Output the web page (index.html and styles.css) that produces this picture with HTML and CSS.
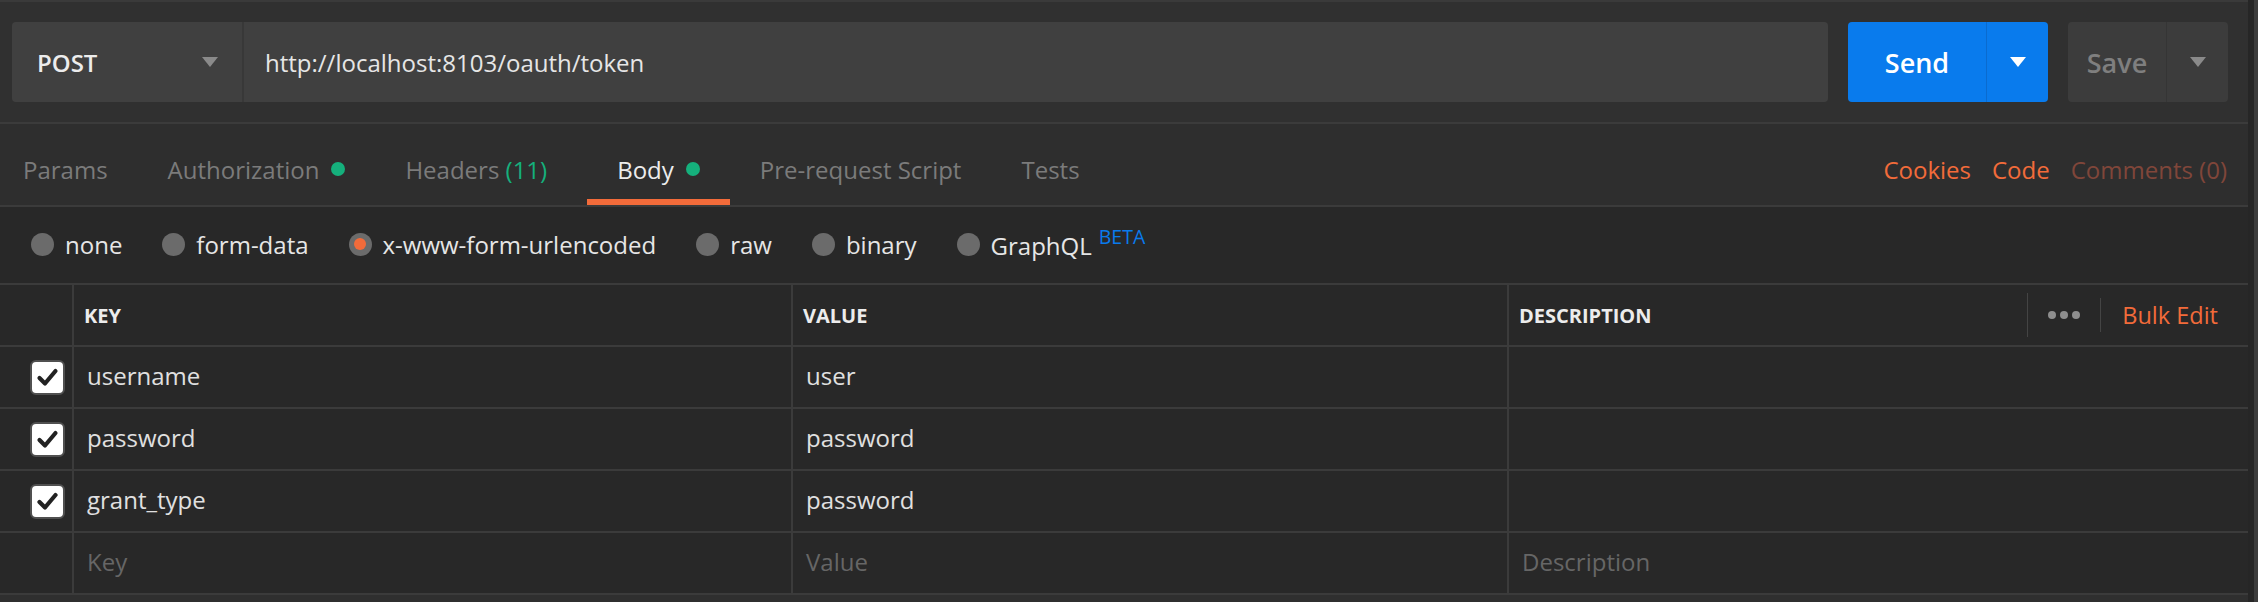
FILE: index.html
```html
<!DOCTYPE html>
<html>
<head>
<meta charset="utf-8">
<link rel="stylesheet" href="styles.css">
</head>
<body>
<div class="app">
  <div class="main">
    <div class="topbar">
      <div class="urlbox">
        <div class="method">
          <span class="method-name">POST</span>
          <span class="tri tri-gray"></span>
        </div>
        <div class="url">http://localhost:8103/oauth/token</div>
      </div>
      <div class="btn send">
        <span class="btn-label">Send</span>
        <span class="btn-arrow send-arrow"><span class="tri tri-white"></span></span>
      </div>
      <div class="btn save">
        <span class="btn-label">Save</span>
        <span class="btn-arrow save-arrow"><span class="tri tri-gray"></span></span>
      </div>
    </div>

    <div class="tabbar">
      <div class="tabs">
        <div class="tab first">Params</div>
        <div class="tab">Authorization<span class="gdot"></span></div>
        <div class="tab">Headers&nbsp;<span class="count">(11)</span></div>
        <div class="tab active">Body<span class="gdot"></span></div>
        <div class="tab">Pre-request Script</div>
        <div class="tab">Tests</div>
      </div>
      <div class="links">
        <span class="link">Cookies</span>
        <span class="link">Code</span>
        <span class="link dim">Comments (0)</span>
      </div>
    </div>

    <div class="bodytypes">
      <div class="radio"><span class="circle"></span><span>none</span></div>
      <div class="radio"><span class="circle"></span><span>form-data</span></div>
      <div class="radio"><span class="circle checked"><span class="inner"></span></span><span>x-www-form-urlencoded</span></div>
      <div class="radio"><span class="circle"></span><span>raw</span></div>
      <div class="radio"><span class="circle"></span><span>binary</span></div>
      <div class="radio"><span class="circle"></span><span class="label">GraphQL<sup class="beta">BETA</sup></span></div>
    </div>

    <div class="table">
      <div class="cell hcell c0"></div>
      <div class="cell hcell">KEY</div>
      <div class="cell hcell">VALUE</div>
      <div class="cell hcell desc-head">
        <span>DESCRIPTION</span>
        <div class="actions">
          <span class="vsep tall"></span>
          <span class="dots"><i></i><i></i><i></i></span>
          <span class="vsep"></span>
          <span class="bulk">Bulk Edit</span>
        </div>
      </div>

      <div class="cell c0"><span class="cb"><svg width="31" height="31" viewBox="0 0 31 31"><polyline points="7.5,16 13,21.5 23.5,9" fill="none" stroke="#222" stroke-width="4.2" stroke-linecap="round" stroke-linejoin="round"/></svg></span></div>
      <div class="cell txt">username</div>
      <div class="cell txt">user</div>
      <div class="cell txt"></div>

      <div class="cell c0"><span class="cb"><svg width="31" height="31" viewBox="0 0 31 31"><polyline points="7.5,16 13,21.5 23.5,9" fill="none" stroke="#222" stroke-width="4.2" stroke-linecap="round" stroke-linejoin="round"/></svg></span></div>
      <div class="cell txt">password</div>
      <div class="cell txt">password</div>
      <div class="cell txt"></div>

      <div class="cell c0"><span class="cb"><svg width="31" height="31" viewBox="0 0 31 31"><polyline points="7.5,16 13,21.5 23.5,9" fill="none" stroke="#222" stroke-width="4.2" stroke-linecap="round" stroke-linejoin="round"/></svg></span></div>
      <div class="cell txt">grant_type</div>
      <div class="cell txt">password</div>
      <div class="cell txt"></div>

      <div class="cell c0"></div>
      <div class="cell txt ph">Key</div>
      <div class="cell txt ph">Value</div>
      <div class="cell txt ph">Description</div>
    </div>
    <div class="footer"></div>
  </div>
  <div class="scrollbar">
    <div class="sb-dark"></div>
    <div class="sb-light"></div>
  </div>
</div>
</body>
</html>
```

FILE: styles.css
```css
* { box-sizing: border-box; }
html, body {
  margin: 0;
  padding: 0;
  background: #2f2f2f;
}
body {
  font-family: "Open Sans", "Noto Sans", sans-serif;
  font-size: 24px;
  color: #e0e0e0;
}
.app {
  display: flex;
  width: 2258px;
  height: 602px;
  overflow: hidden;
}
.main {
  width: 2248px;
  display: flex;
  flex-direction: column;
  background: #2f2f2f;
}
.scrollbar {
  width: 10px;
  display: flex;
}
.sb-dark { width: 6px; background: #262626; }
.sb-light { width: 4px; background: #3c3c3c; }

/* top bar */
.topbar {
  display: flex;
  gap: 20px;
  padding: 20px 20px 20px 12px;
  border-top: 2px solid #3a3a3a;
  border-bottom: 2px solid #3b3b3b;
  height: 124px;
  background: #303030;
}
.urlbox {
  flex: 1;
  display: flex;
  background: #404040;
  border-radius: 4px;
  height: 80px;
}
.method {
  width: 232px;
  display: flex;
  align-items: center;
  justify-content: space-between;
  padding: 0 24px 0 25px;
  border-right: 2px solid #383838;
}
.method-name {
  font-weight: 600;
  font-size: 24px;
  color: #ececec;
}
.url {
  display: flex;
  align-items: center;
  padding-left: 21px;
  color: #e6e6e6;
}
.tri {
  width: 0;
  height: 0;
  border-left: 8px solid transparent;
  border-right: 8px solid transparent;
  border-top: 10px solid #8a8a8a;
}
.tri-white { border-top-color: #ffffff; }
.tri-gray { border-top-color: #8a8a8a; }
.btn {
  display: flex;
  height: 80px;
  border-radius: 4px;
  font-size: 27px;
  font-weight: 600;
}
.send {
  width: 200px;
  background: #097bed;
  color: #ffffff;
}
.save {
  width: 160px;
  background: #3c3c3c;
  color: #7f7f7f;
}
.btn-label {
  display: flex;
  align-items: center;
  justify-content: center;
}
.send .btn-label { width: 139px; border-right: 1px solid #0a6bcf; }
.save .btn-label { width: 99px; border-right: 1px solid #353535; }
.btn-arrow {
  flex: 1;
  display: flex;
  align-items: center;
  justify-content: center;
}

/* tabs */
.tabbar {
  display: flex;
  justify-content: space-between;
  height: 83px;
  border-bottom: 2px solid #3b3b3b;
  background: #2e2e2e;
}
.tabs {
  display: flex;
}
.tab {
  display: flex;
  align-items: center;
  padding: 9px 30px 0;
  color: #7b7b7b;
}
.tab.first { padding-left: 23px; }
.tab.active {
  color: #ececec;
  box-shadow: inset 0 -6px 0 #f26b3a;
}
.gdot {
  width: 14px;
  height: 14px;
  border-radius: 50%;
  background: #15b07c;
  margin-left: 12px;
}
.count {
  color: #15b07c;
  margin-right: 10px;
}
.links {
  display: flex;
  align-items: center;
  gap: 21px;
  padding: 9px 21px 0 0;
}
.link { color: #f26b3a; }
.link.dim { color: #80463a; }

/* body types */
.bodytypes {
  display: flex;
  align-items: center;
  gap: 40px;
  height: 78px;
  padding-left: 31px;
  padding-bottom: 2px;
  background: #282828;
  border-bottom: 2px solid #3b3b3b;
  color: #e6e6e6;
}
.radio {
  display: flex;
  align-items: center;
  gap: 11px;
}
.circle {
  width: 23px;
  height: 23px;
  border-radius: 50%;
  background: #6b6b6b;
  display: flex;
  align-items: center;
  justify-content: center;
}
.inner {
  width: 12px;
  height: 12px;
  border-radius: 50%;
  background: #f26b3a;
}
.beta {
  font-size: 19.5px;
  font-weight: 500;
  color: #097bed;
  margin-left: 7px;
  vertical-align: 11px;
  line-height: 1;
}

/* table */
.table {
  display: grid;
  grid-template-columns: 72px 719px 716px 1fr;
  grid-auto-rows: 62px;
  background: #282828;
}
.cell {
  display: flex;
  align-items: center;
  padding-left: 13px;
  border-left: 2px solid #3b3b3b;
  border-bottom: 2px solid #3b3b3b;
  color: #e0e0e0;
}
.cell.txt { padding-bottom: 4px; }
.cell.c0 {
  border-left: none;
  justify-content: flex-end;
  padding: 0 7px 0 0;
}
.hcell {
  font-size: 20px;
  font-weight: 700;
  color: #ececec;
  padding-left: 10px;
}
.desc-head {
  justify-content: space-between;
  padding-right: 30px;
}
.actions {
  display: flex;
  align-items: center;
  height: 100%;
}
.vsep {
  width: 1px;
  height: 34px;
  background: #444444;
}
.vsep.tall { height: 44px; }
.dots {
  display: flex;
  gap: 4px;
  padding: 0 20px;
}
.dots i {
  width: 8px;
  height: 8px;
  border-radius: 50%;
  background: #8e8e8e;
}
.bulk {
  font-size: 23.5px;
  font-weight: 400;
  color: #f26b3a;
  padding-left: 21px;
}
.cb {
  width: 35px;
  height: 35px;
  border: 2px solid #505050;
  border-radius: 6px;
  background: #ffffff;
  display: flex;
  align-items: center;
  justify-content: center;
}
.ph { color: #666666; }
.footer {
  flex: 1;
  background: #2f2f2f;
}
```
